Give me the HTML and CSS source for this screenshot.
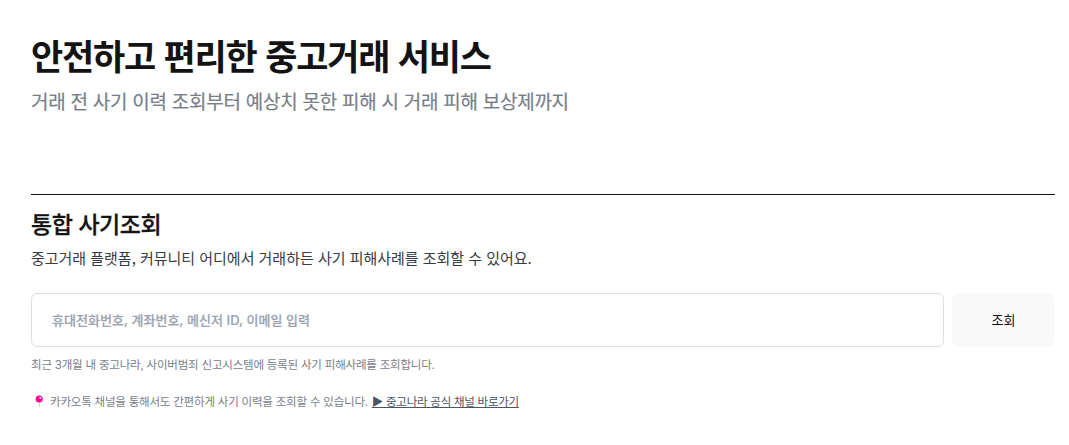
FILE: index.html
```html
<!DOCTYPE html>
<html lang="ko">
<head>
    <meta charset="UTF-8">
    <meta name="viewport" content="width=device-width, initial-scale=1.0">
    <title>통합 사기조회</title>
    <link rel="stylesheet" href="styles.css">
</head>
<body>
    <main class="fraud-page">
        <header class="page-header">
            <h1>안전하고 편리한 중고거래 서비스</h1>
            <p>거래 전 사기 이력 조회부터 예상치 못한 피해 시 거래 피해 보상제까지</p>
        </header>
        <section class="search-section">
            <h2>통합 사기조회</h2>
            <p class="description">중고거래 플랫폼, 커뮤니티 어디에서 거래하든 사기 피해사례를 조회할 수 있어요.</p>
            <form class="search-form">
                <input type="text" class="search-input" placeholder="휴대전화번호, 계좌번호, 메신저 ID, 이메일 입력">
                <button type="button" class="search-button">조회</button>
            </form>
            <p class="notice">최근 3개월 내 중고나라, 사이버범죄 신고시스템에 등록된 사기 피해사례를 조회합니다.</p>
            <p class="channel">
                <svg class="pin" width="16" height="16" viewBox="0 0 16 16">
                    <path d="M8.5 8v6" stroke="#cdd1d6" stroke-width="1"/>
                    <circle cx="8.2" cy="6" r="3.6" fill="#fb0493"/>
                    <circle cx="9.3" cy="4.9" r="1" fill="#fff"/>
                </svg>
                <span class="channel-text">카카오톡 채널을 통해서도 간편하게 사기 이력을 조회할 수 있습니다.</span>
                <a href="#" class="channel-link">▶ 중고나라 공식 채널 바로가기</a>
            </p>
        </section>
    </main>
</body>
</html>
```
FILE: styles.css
```css
* {
    box-sizing: border-box;
    margin: 0;
    padding: 0;
}
body {
    font-family: "Noto Sans CJK KR", sans-serif;
    background-color: #fff;
    color: #141313;
}
.fraud-page {
    padding: 30px 14px 0 31px;
}
.page-header {
    height: 164px;
}
.page-header h1 {
    font-size: 35px;
    line-height: 50px;
    font-weight: 700;
    letter-spacing: -1.2px;
}
.page-header p {
    margin-top: 7px;
    font-size: 19px;
    line-height: 28px;
    font-weight: 400;
    letter-spacing: -0.26px;
    color: #787e89;
    -webkit-text-stroke: 0.2px #787e89;
}
.search-section {
    border-top: 1px solid #141313;
    padding-top: 13px;
}
.search-section h2 {
    font-size: 23px;
    line-height: 30px;
    font-weight: 500;
    letter-spacing: -0.45px;
    -webkit-text-stroke: 0.3px #141313;
}
.description {
    margin-top: 9px;
    font-size: 15px;
    line-height: 22px;
    letter-spacing: -0.02px;
    color: #363c45;
}
.search-form {
    display: flex;
    gap: 8px;
    margin-top: 24px;
}
.search-input {
    flex: 1;
    height: 54px;
    padding: 0 20px 1px;
    border: 1px solid #dadee5;
    border-radius: 6px;
    font-family: Inter, "Noto Sans CJK KR", sans-serif;
    font-size: 13px;
    font-weight: 500;
    letter-spacing: 0.06px;
}
.search-input::placeholder {
    color: #9ca3af;
    -webkit-text-stroke: 0.2px #9ca3af;
}
.search-button {
    width: 103px;
    padding-bottom: 2px;
    border: none;
    border-radius: 6px;
    background-color: #f9f9f9;
    color: #141313;
    font-family: inherit;
    font-size: 13px;
    font-weight: 400;
}
.notice {
    margin-top: 9px;
    font-family: Inter, "Noto Sans CJK KR", sans-serif;
    font-size: 11.5px;
    line-height: 18px;
    letter-spacing: -0.2px;
    color: #787e89;
}
.channel {
    display: flex;
    align-items: center;
    margin-top: 18px;
    font-size: 11.5px;
    line-height: 18px;
    letter-spacing: -0.2px;
    color: #787e89;
}
.channel-text {
    margin: 0 4px 0 3px;
}
.channel-link {
    color: #4b5563;
    letter-spacing: -0.25px;
    text-underline-offset: 1px;
}
```
